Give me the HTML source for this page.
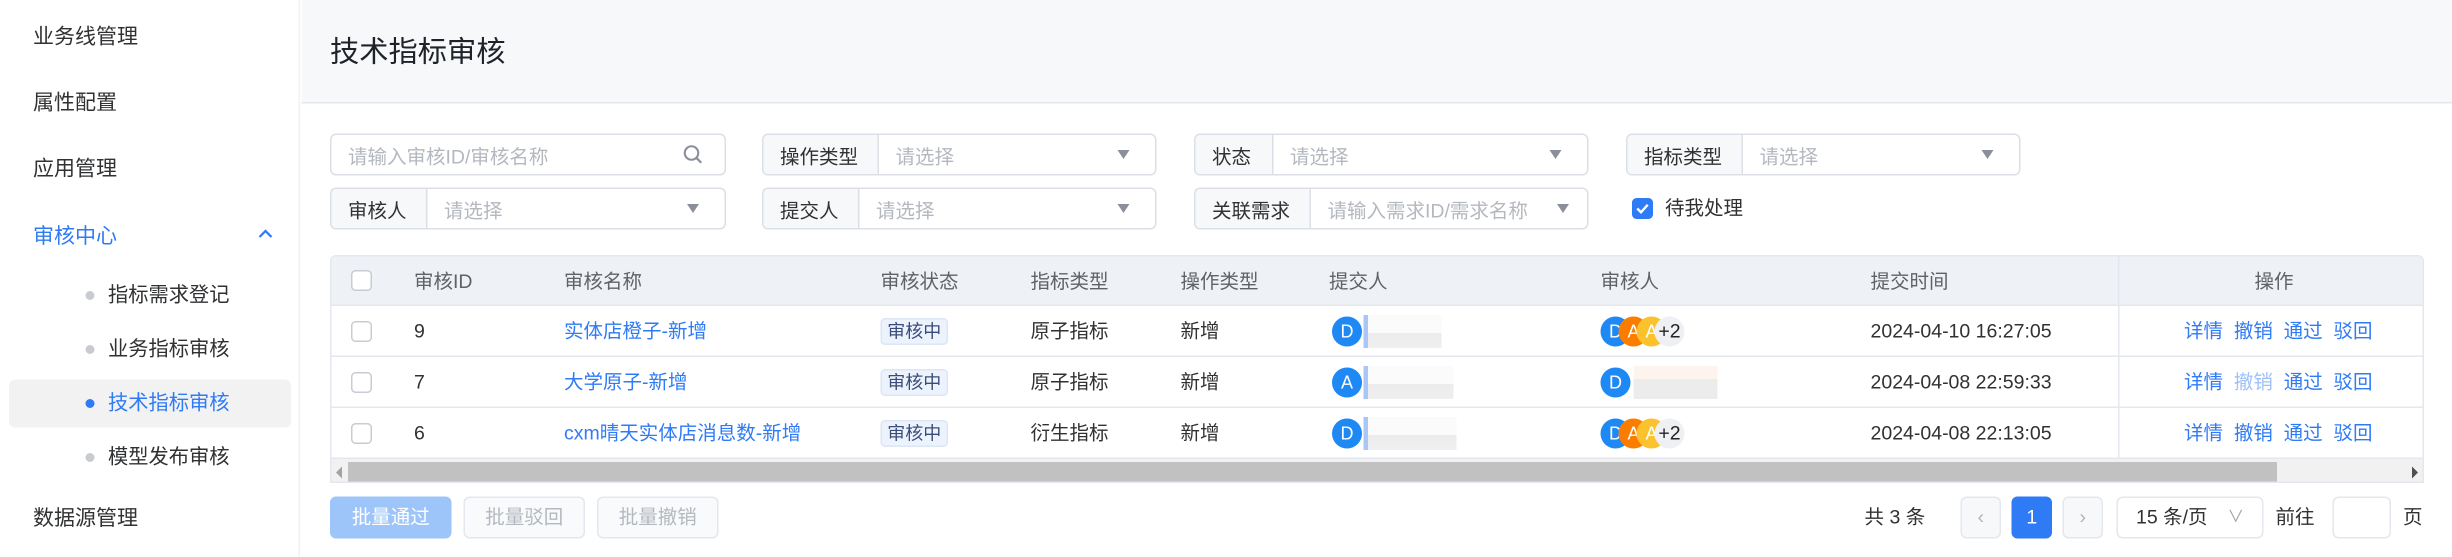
<!DOCTYPE html>
<html><head><meta charset="utf-8"><style>
*{box-sizing:border-box;margin:0;padding:0}
html,body{width:2452px;height:556px;overflow:hidden;background:#fff}
#r{position:absolute;left:0;top:0;width:1635px;height:371px;transform:scale(1.5);transform-origin:0 0;font-family:"Liberation Sans","Noto Sans CJK SC",sans-serif;font-size:13px;color:#303133;background:#fff}
.a{position:absolute}
.side{left:0;top:0;width:200px;height:371px;background:#fff;border-right:1px solid #eef0f3}
.si{position:absolute;left:22px;font-size:14px;color:#303133;line-height:20px}
.sub{position:absolute;left:72px;font-size:13.5px;color:#303133;line-height:20px}
.dot{position:absolute;left:57px;width:6px;height:6px;border-radius:50%;background:#c8cbd0}
.hdr{left:201px;top:0;width:1434px;height:69px;background:#f7f8fa;border-bottom:1px solid #e4e7ed}
.box{position:absolute;height:28px;border:1px solid #dcdfe6;border-radius:4px;background:#fff;display:flex;align-items:center;overflow:hidden}
.lbl{height:100%;background:#f7f8fa;border-right:1px solid #dcdfe6;display:flex;align-items:center;padding-left:11px;color:#303133;flex:none}
.ph{color:#b4b8bf;padding-left:11px;flex:1}
.car{width:0;height:0;border-left:4px solid transparent;border-right:4px solid transparent;border-top:6px solid #8a8f99;margin-right:17px}
.tbl{left:220px;top:170px;width:1396px;height:152px;border:1px solid #e4e7ed;border-radius:4px 4px 0 0;overflow:hidden}
.th{position:absolute;left:0;top:0;width:100%;height:33px;background:#eef1f5;border-bottom:1px solid #e4e7ed}
.row{position:absolute;left:0;width:100%;height:34px;border-bottom:1px solid #e4e7ed}
.c{position:absolute;line-height:20px;white-space:nowrap}
.th .c{top:7px;color:#606266}
.row .c{top:7px}
.cb{position:absolute;left:13px;width:14px;height:14px;border:1px solid #c8ccd2;border-radius:3px;background:#fff}
.lk{color:#2f7bf5}
.tag{position:absolute;left:366px;top:8px;width:45px;height:18px;background:#edf3fd;border:1px solid #dde6f5;border-radius:3px;color:#3a4d7a;font-size:12px;line-height:16px;text-align:center}
.av{position:absolute;top:7px;width:20px;height:20px;border-radius:50%;color:#fff;font-size:12px;line-height:20px;text-align:center}
.blur{position:absolute;top:6px;height:22px;background:linear-gradient(180deg,#fbfbfc 0,#fbfbfc 55%,#ececec 55%,#efefef 100%)}
.fx{position:absolute;left:1191px;top:0;width:205px;height:135px;border-left:1px solid #e4e7ed;background:transparent}
.btn{position:absolute;top:331px;height:28px;width:81px;border:1px solid #e4e7ed;border-radius:4px;background:#f9fafb;color:#b4b8bf;text-align:center;line-height:26px}
.pg{position:absolute;top:331px;height:28px;border:1px solid #e4e7ed;border-radius:4px;background:#f7f8fa;text-align:center;line-height:26px;color:#b0b4bb}
</style></head><body><div id="r">
<div class="a side">
<div class="si" style="top:14px">业务线管理</div>
<div class="si" style="top:58px">属性配置</div>
<div class="si" style="top:102px">应用管理</div>
<div class="si" style="top:147px;color:#2f7bf5">审核中心</div>
<svg class="a" style="left:172px;top:152px" width="10" height="8" viewBox="0 0 10 8"><path d="M1 6 L5 2 L9 6" fill="none" stroke="#2f7bf5" stroke-width="1.5"/></svg>
<div class="a" style="left:6px;top:253px;width:188px;height:32px;background:#f2f2f3;border-radius:4px"></div>
<div class="dot" style="top:194px"></div><div class="sub" style="top:187px">指标需求登记</div>
<div class="dot" style="top:230px"></div><div class="sub" style="top:223px">业务指标审核</div>
<div class="dot" style="top:266px;background:#2f7bf5"></div><div class="sub" style="top:259px;color:#2f7bf5">技术指标审核</div>
<div class="dot" style="top:302px"></div><div class="sub" style="top:295px">模型发布审核</div>
<div class="si" style="top:335px">数据源管理</div>
</div>
<div class="a hdr"><div class="a" style="left:19px;top:21px;font-size:19.5px;color:#1f2329;line-height:28px">技术指标审核</div></div>

<div class="box" style="left:220px;top:89px;width:264px"><span class="ph">请输入审核ID/审核名称</span>
<svg width="14" height="14" viewBox="0 0 14 14" style="margin-right:14px"><circle cx="6" cy="6" r="4.5" fill="none" stroke="#8a8f99" stroke-width="1.4"/><path d="M9.3 9.3 L12.5 12.5" stroke="#8a8f99" stroke-width="1.5"/></svg></div>
<div class="box" style="left:508px;top:89px;width:263px"><span class="lbl" style="width:77px">操作类型</span><span class="ph">请选择</span><span class="car"></span></div>
<div class="box" style="left:796px;top:89px;width:263px"><span class="lbl" style="width:52px">状态</span><span class="ph">请选择</span><span class="car"></span></div>
<div class="box" style="left:1084px;top:89px;width:263px"><span class="lbl" style="width:77px">指标类型</span><span class="ph">请选择</span><span class="car"></span></div>
<div class="box" style="left:220px;top:125px;width:264px"><span class="lbl" style="width:64px">审核人</span><span class="ph">请选择</span><span class="car"></span></div>
<div class="box" style="left:508px;top:125px;width:263px"><span class="lbl" style="width:64px">提交人</span><span class="ph">请选择</span><span class="car"></span></div>
<div class="box" style="left:796px;top:125px;width:263px"><span class="lbl" style="width:77px">关联需求</span><span class="ph">请输入需求ID/需求名称</span><span class="car" style="margin-right:12px"></span></div>
<div class="a" style="left:1088px;top:132px;width:14px;height:14px;background:#2f7bf5;border-radius:3px"><svg width="14" height="14" viewBox="0 0 14 14" style="display:block"><path d="M3.5 7 L6 9.5 L10.5 4.5" fill="none" stroke="#fff" stroke-width="1.6"/></svg></div>
<div class="a" style="left:1110px;top:129px;line-height:20px">待我处理</div>

<div class="a tbl">
<div class="th"><span class="cb" style="top:9px"></span>
<span class="c" style="left:55px">审核ID</span><span class="c" style="left:155px">审核名称</span><span class="c" style="left:366px">审核状态</span><span class="c" style="left:466px">指标类型</span><span class="c" style="left:566px">操作类型</span><span class="c" style="left:665px">提交人</span><span class="c" style="left:846px">审核人</span><span class="c" style="left:1026px">提交时间</span><span class="c" style="left:1282px">操作</span></div>

<div class="row" style="top:33px"><span class="cb" style="top:10px"></span><span class="c" style="left:55px">9</span><span class="c lk" style="left:155px">实体店橙子-新增</span><span class="tag">审核中</span><span class="c" style="left:466px">原子指标</span><span class="c" style="left:566px">新增</span>
<span class="av" style="left:667px;background:#1e88f5">D</span><div class="blur" style="left:688px;width:52px;border-left:3px solid #a9c6f7"></div>
<span class="av" style="left:846px;background:#1e88f5">D</span><span class="av" style="left:858px;background:#fa7d00">A</span><span class="av" style="left:870px;background:#fcc22d">A</span><span class="av" style="left:882px;background:#eef0f3;color:#222;font-size:13px">+2</span>
<span class="c" style="left:1026px">2024-04-10 16:27:05</span>
<span class="c lk" style="left:1235px;word-spacing:0">详情&nbsp; 撤销&nbsp; 通过&nbsp; 驳回</span></div>

<div class="row" style="top:67px"><span class="cb" style="top:10px"></span><span class="c" style="left:55px">7</span><span class="c lk" style="left:155px">大学原子-新增</span><span class="tag">审核中</span><span class="c" style="left:466px">原子指标</span><span class="c" style="left:566px">新增</span>
<span class="av" style="left:667px;background:#1e88f5">A</span><div class="blur" style="left:688px;width:60px;border-left:3px solid #a9c6f7"></div>
<span class="av" style="left:846px;background:#1e88f5">D</span><div class="blur" style="left:868px;width:56px;background:linear-gradient(180deg,#fdf3f0 0,#fdf5ec 40%,#ececec 40%,#ececec 100%)"></div>
<span class="c" style="left:1026px">2024-04-08 22:59:33</span>
<span class="c lk" style="left:1235px">详情&nbsp; <span style="color:#9fc1f7">撤销</span>&nbsp; 通过&nbsp; 驳回</span></div>

<div class="row" style="top:101px"><span class="cb" style="top:10px"></span><span class="c" style="left:55px">6</span><span class="c lk" style="left:155px">cxm晴天实体店消息数-新增</span><span class="tag">审核中</span><span class="c" style="left:466px">衍生指标</span><span class="c" style="left:566px">新增</span>
<span class="av" style="left:667px;background:#1e88f5">D</span><div class="blur" style="left:688px;width:62px;border-left:3px solid #a9c6f7"></div>
<span class="av" style="left:846px;background:#1e88f5">D</span><span class="av" style="left:858px;background:#fa7d00">A</span><span class="av" style="left:870px;background:#fcc22d">A</span><span class="av" style="left:882px;background:#eef0f3;color:#222;font-size:13px">+2</span>
<span class="c" style="left:1026px">2024-04-08 22:13:05</span>
<span class="c lk" style="left:1235px">详情&nbsp; 撤销&nbsp; 通过&nbsp; 驳回</span></div>
<div class="fx"></div>
<div class="a" style="left:0;top:135px;width:1396px;height:17px;background:#f1f1f1">
<div class="a" style="left:11px;top:2px;width:1286px;height:13px;background:#c1c1c1"></div>
<div class="a" style="left:3px;top:5px;width:0;height:0;border-top:4px solid transparent;border-bottom:4px solid transparent;border-right:4px solid #a3a3a3"></div>
<div class="a" style="left:1387px;top:5px;width:0;height:0;border-top:4px solid transparent;border-bottom:4px solid transparent;border-left:4px solid #505050"></div>
</div>
</div>

<div class="btn" style="left:220px;background:#9ec5fa;border-color:#9ec5fa;color:#fff">批量通过</div>
<div class="btn" style="left:309px">批量驳回</div>
<div class="btn" style="left:398px">批量撤销</div>

<div class="a" style="left:1243px;top:335px;line-height:20px">共 <b style="font-weight:normal;color:#303133">3</b> 条</div>
<div class="pg" style="left:1307px;width:27px">‹</div>
<div class="pg" style="left:1341px;width:27px;background:#2f7bf5;border-color:#2f7bf5;color:#fff">1</div>
<div class="pg" style="left:1375px;width:27px">›</div>
<div class="pg" style="left:1411px;width:98px;background:#fff;color:#303133;text-align:left;padding-left:12px">15 条/页<span style="position:absolute;right:12px;color:#a0a4ab;font-size:11px">∨</span></div>
<div class="a" style="left:1517px;top:335px;line-height:20px">前往</div>
<div class="pg" style="left:1555px;width:39px;background:#fff"></div>
<div class="a" style="left:1602px;top:335px;line-height:20px">页</div>
</div></body></html>
